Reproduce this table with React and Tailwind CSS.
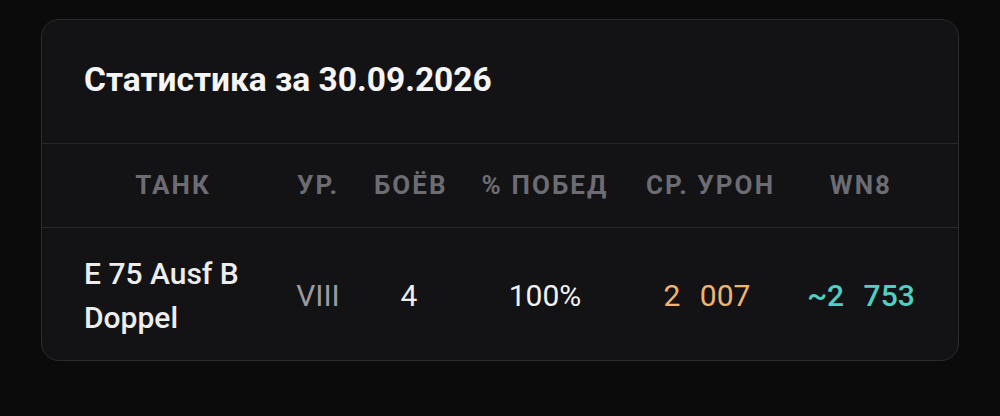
export default function App() {
  const cols = 'grid grid-cols-[178px_112px_70px_202px_122px_186px] pl-[42px]';

  return (
    <div className="min-h-[416px] w-full bg-[#0b0b0c] pt-[19px] pl-[41px] font-['Roboto',sans-serif]">
      <div className="w-[918px] h-[342px] rounded-[18px] border border-[#2c2c30] bg-[#131315] overflow-hidden">
        {/* Title */}
        <div className="h-[124px] flex items-center pl-[42px] pb-[4px] border-b border-[#28282c]">
          <h2 className="text-[33.5px] font-bold text-[#f5f5f5] leading-none">Статистика за 30.09.2026</h2>
        </div>

        {/* Header row */}
        <div className={`${cols} h-[84px] items-center border-b border-[#28282c] text-[#6c6c72] text-[26px] font-bold uppercase tracking-[0.08em] text-center whitespace-nowrap`}>
          <div>Танк</div>
          <div>Ур.</div>
          <div>Боёв</div>
          <div>% Побед</div>
          <div>Ср. Урон</div>
          <div>WN8</div>
        </div>

        {/* Body row */}
        <div className={`${cols} h-[132px] items-center pt-[3px] text-[30px] text-center`}>
          <div className="text-left font-medium text-[#ededed] leading-[44px]">E 75 Ausf B Doppel</div>
          <div className="text-[#9a9aa0]">VIII</div>
          <div className="text-[#ededed]">4</div>
          <div className="text-[#f2f2f2]">100%</div>
          <div className="text-[#f0b572] [word-spacing:12px] whitespace-nowrap">2 007</div>
          <div className="text-[#4fd0c4] font-medium [word-spacing:12px] whitespace-nowrap">~2 753</div>
        </div>
      </div>
    </div>
  );
}
